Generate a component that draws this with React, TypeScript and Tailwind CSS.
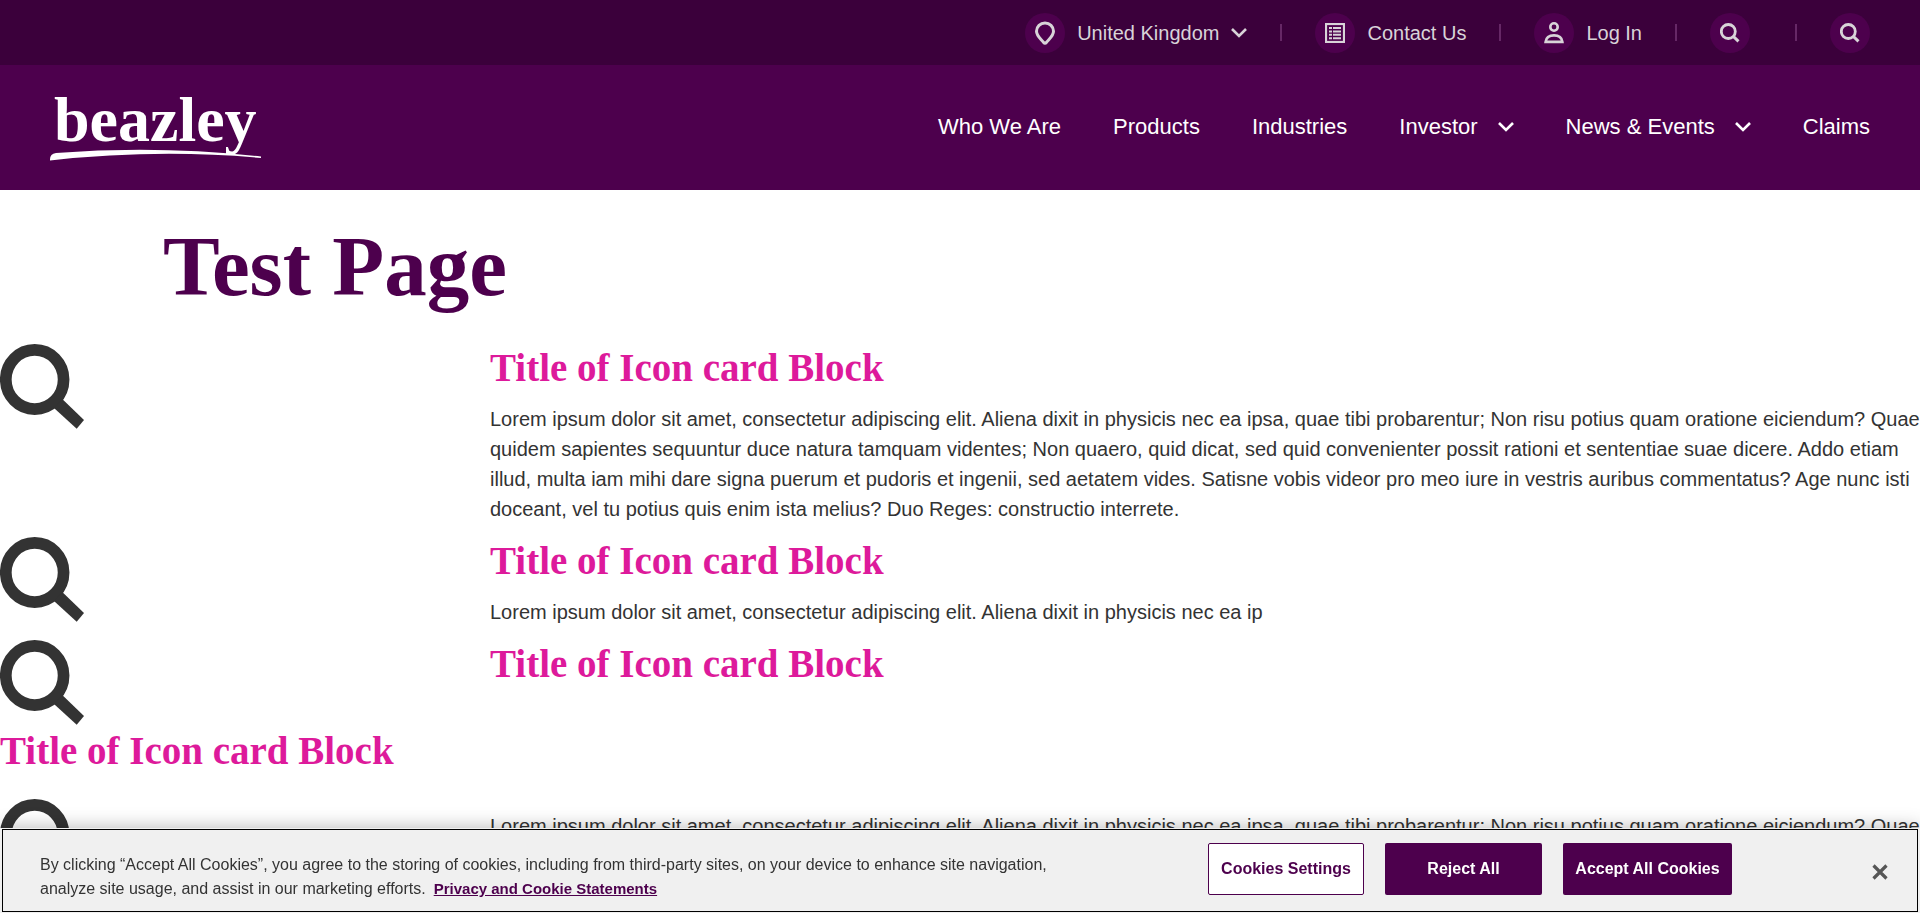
import type { ReactNode } from "react";

const LOREM =
  "Lorem ipsum dolor sit amet, consectetur adipiscing elit. Aliena dixit in physicis nec ea ipsa, quae tibi probarentur; Non risu potius quam oratione eiciendum? Quae quidem sapientes sequuntur duce natura tamquam videntes; Non quaero, quid dicat, sed quid convenienter possit rationi et sententiae suae dicere. Addo etiam illud, multa iam mihi dare signa puerum et pudoris et ingenii, sed aetatem vides. Satisne vobis videor pro meo iure in vestris auribus commentatus? Age nunc isti doceant, vel tu potius quis enim ista melius? Duo Reges: constructio interrete.";
const LOREM_SHORT =
  "Lorem ipsum dolor sit amet, consectetur adipiscing elit. Aliena dixit in physicis nec ea ip";

function Chevron() {
  return (
    <svg width="16" height="10" viewBox="0 0 16 10" fill="none" stroke="currentColor" strokeWidth="2.6" aria-hidden="true">
      <path d="M1 1l7 7 7-7" />
    </svg>
  );
}

function PinIcon() {
  return (
    <svg width="20" height="24" viewBox="0 0 20 24" fill="none" stroke="currentColor" strokeWidth="3" aria-hidden="true">
      <path d="M10 1.9c-4.7 0-8.5 3.7-8.5 8.3 0 4.7 4.3 7.6 7.2 11.3.7.9 1.9.9 2.6 0 2.9-3.7 7.2-6.6 7.2-11.3 0-4.6-3.8-8.3-8.5-8.3z" />
    </svg>
  );
}

function ListIcon() {
  return (
    <svg width="20" height="20" viewBox="0 0 20 20" fill="none" stroke="currentColor" aria-hidden="true">
      <rect x="1" y="1" width="18" height="18" strokeWidth="2.2" />
      <path d="M4 5h3M4 8.4h3M4 11.8h3M4 15.2h3M8 5h8M8 8.4h8M8 11.8h8M8 15.2h8" strokeWidth="2" />
    </svg>
  );
}

function PersonIcon() {
  return (
    <svg width="20" height="22" viewBox="0 0 20 22" fill="none" stroke="currentColor" strokeWidth="2.6" aria-hidden="true">
      <circle cx="10" cy="5" r="3.7" />
      <path d="M1.6 19.9c.5-4 3.7-6.5 8.4-6.5s7.900 2.500 8.400 6.500z" />
    </svg>
  );
}

function SearchIcon() {
  return (
    <svg width="20" height="20" viewBox="0 0 20 20" fill="none" stroke="currentColor" strokeWidth="2.8" aria-hidden="true">
      <circle cx="8.3" cy="8.5" r="7" />
      <path d="M13 13.2l5.5 5.2" strokeWidth="3" />
    </svg>
  );
}

function BigSearchIcon() {
  return (
    <svg className="block text-[#333333]" width="84" height="85" viewBox="0 0 84 85" aria-hidden="true">
      <ellipse cx="34.7" cy="35.5" rx="28.9" ry="29.6" fill="none" stroke="currentColor" strokeWidth="11.7" />
      <path d="M54 64l8.500-8.800L84 76l-7.300 8.700z" fill="currentColor" />
    </svg>
  );
}

function Logo() {
  return (
    <svg className="overflow-visible" width="212" height="68" viewBox="0 0 212 68" fill="#ffffff" role="img" aria-label="beazley">
      <text x="4" y="47" className="font-['Liberation_Serif',serif] text-[64px] font-bold">
        beazley
      </text>
      <path d="M0 66.500Q-.500 60 6 59Q108 51 211 62.500V64Q108 54.500 0 66.500z" />
    </svg>
  );
}

function Badge({ children }: { children: ReactNode }) {
  return (
    <span className="flex size-10 items-center justify-center rounded-full bg-[#4d004d]">{children}</span>
  );
}

function Divider() {
  return <span className="h-[17px] w-0.5 bg-[#662866]" />;
}

function BlockTitle() {
  return (
    <h2 className="font-['Liberation_Serif',serif] text-[39px] leading-[48px] font-bold text-[#dd1a9b]">
      Title of Icon card Block
    </h2>
  );
}

function IconCard({ title = true, text }: { title?: boolean; text?: string }) {
  return (
    <section className="flex items-start">
      <div className="w-1/4 shrink-0 pb-0.5">
        <BigSearchIcon />
      </div>
      <div className="flex-1 pl-2.5">
        {title && <BlockTitle />}
        {text && <p className="mt-3 mb-[13px] text-xl leading-[30px]">{text}</p>}
      </div>
    </section>
  );
}

export default function App() {
  return (
    <div className="h-screen overflow-hidden bg-white font-['Liberation_Sans',sans-serif] text-[#333333]">
      <header>
        <div className="flex h-[65px] items-center justify-end gap-[33px] bg-[#3b003b] px-[50px] text-xl text-[#d8d3d8]">
          <button type="button" className="flex items-center gap-3">
            <Badge><PinIcon /></Badge>
            United Kingdom
            <Chevron />
          </button>
          <Divider />
          <a href="#contact" className="flex items-center gap-3">
            <Badge><ListIcon /></Badge>
            Contact Us
          </a>
          <Divider />
          <a href="#login" className="flex items-center gap-3">
            <Badge><PersonIcon /></Badge>
            Log In
          </a>
          <Divider />
          <button type="button" aria-label="Search" className="pr-3">
            <Badge><SearchIcon /></Badge>
          </button>
          <Divider />
          <button type="button" aria-label="Search">
            <Badge><SearchIcon /></Badge>
          </button>
        </div>
        <div className="flex h-[125px] items-center justify-between bg-[#4d004d] px-[50px]">
          <a href="#home"><Logo /></a>
          <nav className="flex items-center gap-[52px] pb-0.5 text-[22px] text-white">
            <a href="#who">Who We Are</a>
            <a href="#products">Products</a>
            <a href="#industries">Industries</a>
            <a href="#investor" className="flex items-center gap-5">Investor<Chevron /></a>
            <a href="#news" className="flex items-center gap-5">News &amp; Events<Chevron /></a>
            <a href="#claims">Claims</a>
          </nav>
        </div>
      </header>

      <main>
        <h1 className="px-[163px] pt-7 pb-[30px] font-['Liberation_Serif',serif] text-[85px] leading-[96px] font-bold text-[#4d004d]">
          Test Page
        </h1>
        <IconCard text={LOREM} />
        <IconCard text={LOREM_SHORT} />
        <IconCard />
        <BlockTitle />
        <div className="pt-6">
          <IconCard title={false} text={LOREM} />
        </div>
      </main>

      <div role="dialog" aria-label="Cookie consent" className="fixed inset-x-0 bottom-0 bg-[#f0f0f0] px-0.5 py-px shadow-[0_0_18px_rgba(0,0,0,0.3)]">
        <div className="flex items-start border border-black pt-[13px] pr-[29px] pb-2.5 pl-[37px]">
          <p className="w-[1040px] pt-2.5 text-base leading-6">
            By clicking “Accept All Cookies”, you agree to the storing of cookies, including from third-party sites, on your device to enhance site navigation, analyze site usage, and assist in our marketing efforts.
            <a href="#privacy" className="ml-2 text-[15px] font-bold text-[#4d004d] underline">Privacy and Cookie Statements</a>
          </p>
          <div className="ml-auto flex items-center gap-[21px] text-base font-bold">
            <button type="button" className="h-[52px] w-[156px] rounded-xs border border-[#4d004d] bg-white text-[#4d004d]">Cookies Settings</button>
            <button type="button" className="h-[52px] w-[157px] rounded-xs bg-[#4d004d] text-white">Reject All</button>
            <button type="button" className="h-[52px] w-[169px] rounded-xs bg-[#4d004d] text-white">Accept All Cookies</button>
          </div>
          <button type="button" aria-label="Close" className="ml-[140px] self-center text-[#565656]">
            <svg width="16" height="16" viewBox="0 0 16 16" fill="none" stroke="currentColor" strokeWidth="3.2" aria-hidden="true">
              <path d="M1.500 1.500l13 13M14.500 1.500l-13 13" />
            </svg>
          </button>
        </div>
      </div>
    </div>
  );
}
